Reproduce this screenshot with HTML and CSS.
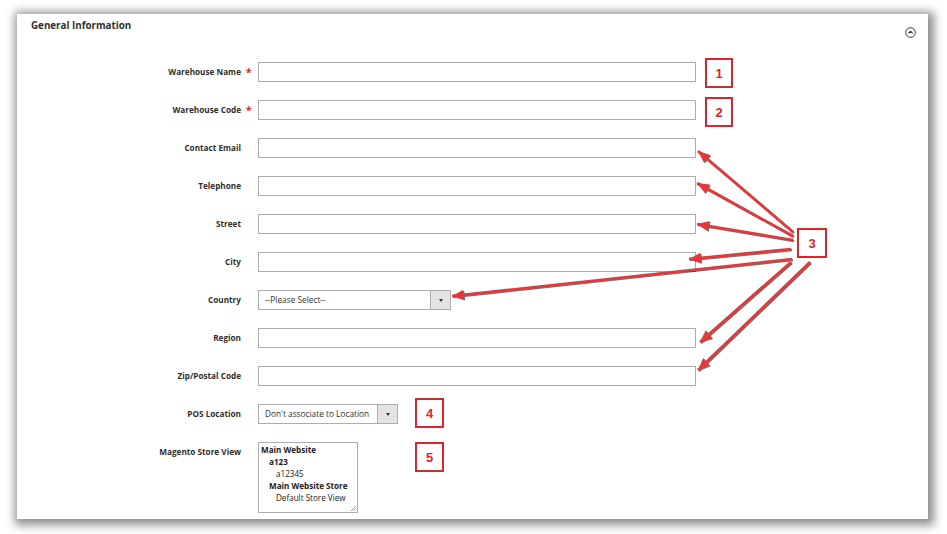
FILE: index.html
```html
<!DOCTYPE html>
<html>
<head>
<meta charset="utf-8">
<link rel="stylesheet" href="styles.css">
</head>
<body>
<div class="stage">
  <section class="panel">
    <header class="panel-head">
      <h2 class="panel-title">General Information</h2>
      <span class="collapse-icon">
        <svg width="11" height="11" viewBox="0 0 11 11"><circle cx="5.5" cy="5.5" r="4.8" fill="none" stroke="#333" stroke-width="1"/><path d="M3.3 6.4 L5.5 4.3 L7.7 6.4" fill="none" stroke="#333" stroke-width="1.1"/></svg>
      </span>
    </header>
    <div class="form">
      <div class="row"><label class="lbl">Warehouse Name</label><span class="req">*</span><div class="field"><input class="txt" type="text"></div></div>
      <div class="row"><label class="lbl">Warehouse Code</label><span class="req">*</span><div class="field"><input class="txt" type="text"></div></div>
      <div class="row"><label class="lbl">Contact Email</label><span class="req"></span><div class="field"><input class="txt" type="text"></div></div>
      <div class="row"><label class="lbl">Telephone</label><span class="req"></span><div class="field"><input class="txt" type="text"></div></div>
      <div class="row"><label class="lbl">Street</label><span class="req"></span><div class="field"><input class="txt" type="text"></div></div>
      <div class="row"><label class="lbl">City</label><span class="req"></span><div class="field"><input class="txt" type="text"></div></div>
      <div class="row"><label class="lbl">Country</label><span class="req"></span><div class="field"><div class="sel sel-country"><span class="sel-text">--Please Select--</span><span class="sel-btn"><span class="caret"></span></span></div></div></div>
      <div class="row"><label class="lbl">Region</label><span class="req"></span><div class="field"><input class="txt" type="text"></div></div>
      <div class="row"><label class="lbl">Zip/Postal Code</label><span class="req"></span><div class="field"><input class="txt" type="text"></div></div>
      <div class="row"><label class="lbl">POS Location</label><span class="req"></span><div class="field"><div class="sel sel-pos"><span class="sel-text">Don't associate to Location</span><span class="sel-btn"><span class="caret"></span></span></div></div></div>
      <div class="row"><label class="lbl">Magento Store View</label><span class="req"></span><div class="field">
        <div class="multi">
          <div class="opt b l0">Main Website</div>
          <div class="opt b l1">a123</div>
          <div class="opt l2">a12345</div>
          <div class="opt b l1">Main Website Store</div>
          <div class="opt l2">Default Store View</div>
          <svg class="grip" width="6" height="6" viewBox="0 0 6 6"><path d="M1 6 L6 1 M3.5 6 L6 3.5" stroke="#888" stroke-width="0.8"/></svg>
        </div>
      </div></div>
    </div>
  </section>
</div>
<svg class="annot" width="947" height="534" viewBox="0 0 947 534">
  <defs>
    <marker id="ah" markerUnits="userSpaceOnUse" markerWidth="14" markerHeight="12" refX="12" refY="5" orient="auto">
      <path d="M0 0 L12 5 L0 10 Z" fill="#e6383a"/>
    </marker>
  </defs>
  <g class="arrows" stroke="#e6383a" stroke-width="2.6" fill="none">
    <line x1="793" y1="232" x2="698" y2="151" marker-end="url(#ah)"/>
    <line x1="793" y1="236" x2="697" y2="183" marker-end="url(#ah)"/>
    <line x1="793" y1="240" x2="697" y2="224" marker-end="url(#ah)"/>
    <line x1="791" y1="249" x2="689" y2="259" marker-end="url(#ah)"/>
    <line x1="792" y1="259" x2="452" y2="296" marker-end="url(#ah)"/>
    <line x1="791" y1="262" x2="700" y2="342" marker-end="url(#ah)"/>
    <line x1="810" y1="262" x2="698" y2="370" marker-end="url(#ah)"/>
  </g>
  <g class="boxes" fill="#fff" stroke="#d8262b" stroke-width="2">
    <rect x="706" y="59" width="26" height="28"/>
    <rect x="706" y="98" width="26" height="28"/>
    <rect x="798" y="229" width="28" height="28"/>
    <rect x="416" y="399" width="27" height="28"/>
    <rect x="416" y="443" width="27" height="28"/>
  </g>
  <g class="nums" fill="#d8262b">
    <text x="719" y="78">1</text>
    <text x="719" y="117">2</text>
    <text x="812" y="248">3</text>
    <text x="429.5" y="418">4</text>
    <text x="429.5" y="462">5</text>
  </g>
</svg>
</body>
</html>
```

FILE: styles.css
```css
html, body {
  margin: 0;
  padding: 0;
  background: #fff;
  font-family: "Open Sans", "Liberation Sans", sans-serif;
  color: #303030;
}
.stage {
  width: 947px;
  height: 534px;
  padding: 14px 19px 0 17px;
  box-sizing: border-box;
  position: relative;
}
.panel {
  width: 911px;
  height: 505px;
  background: #fff;
  box-shadow: 2px 2px 9px 4px rgba(0, 0, 0, 0.45);
  box-sizing: border-box;
  padding: 0;
  display: flex;
  flex-direction: column;
}
.panel-head {
  display: flex;
  justify-content: space-between;
  align-items: flex-start;
  padding: 5px 12px 0 14px;
  height: 48px;
  box-sizing: border-box;
}
.panel-title {
  margin: 0;
  font-size: 9.8px;
  font-weight: 700;
  line-height: 14px;
  color: #303030;
}
.collapse-icon {
  display: block;
  margin-top: 8px;
  width: 11px;
  height: 11px;
}
.collapse-icon svg { display: block; }
.form {
  display: flex;
  flex-direction: column;
  gap: 18px;
}
.row {
  display: grid;
  grid-template-columns: 224px 17px 1fr;
  align-items: start;
  height: 20px;
}
.row:last-child { height: auto; }
.lbl {
  text-align: right;
  font-size: 8.2px;
  font-weight: 700;
  line-height: 20px;
  color: #303030;
  white-space: nowrap;
}
.req {
  color: #e22626;
  font-size: 10px;
  font-weight: 700;
  line-height: 20px;
  padding-left: 5px;
}
.field { display: flex; }
.txt {
  width: 438px;
  height: 20px;
  box-sizing: border-box;
  margin: 0;
  border: 1px solid #adadad;
  background: #fff;
  padding: 0 6px;
  font: inherit;
}
.sel {
  height: 20px;
  box-sizing: border-box;
  border: 1px solid #adadad;
  display: flex;
  align-items: stretch;
  background: #fff;
}
.sel-country { width: 193px; }
.sel-pos { width: 140px; }
.sel-text {
  flex: 1;
  font-size: 8.3px;
  line-height: 18px;
  padding-left: 6px;
  color: #303030;
  white-space: nowrap;
}
.sel-btn {
  width: 19px;
  background: #e3e3e3;
  border-left: 1px solid #adadad;
  display: flex;
  align-items: center;
  justify-content: center;
}
.caret {
  width: 0;
  height: 0;
  border-left: 2.5px solid transparent;
  border-right: 2.5px solid transparent;
  border-top: 3px solid #333;
}
.multi {
  position: relative;
  width: 100px;
  height: 71px;
  box-sizing: border-box;
  border: 1px solid #adadad;
  padding: 1px 0 0 2px;
  background: #fff;
}
.opt {
  font-size: 8.1px;
  line-height: 12px;
  color: #222;
  white-space: nowrap;
}
.opt.b { font-weight: 700; }
.l1 { padding-left: 8px; }
.l2 { padding-left: 15px; }
.grip {
  position: absolute;
  right: 1px;
  bottom: 1px;
}
.annot {
  position: absolute;
  top: 0;
  left: 0;
  pointer-events: none;
}
.arrows {
  filter: drop-shadow(1px 1px 0.7px rgba(0, 0, 0, 0.55));
}
.nums text {
  font-family: "Liberation Sans", Arial, sans-serif;
  font-weight: 700;
  font-size: 13px;
  text-anchor: middle;
}
```
